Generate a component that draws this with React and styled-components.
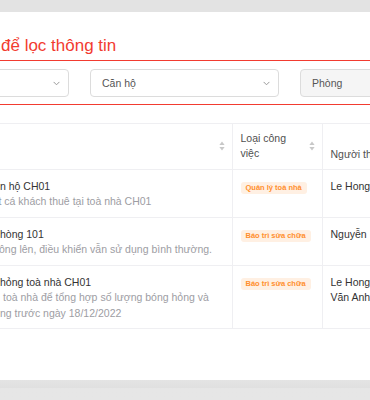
import React from "react";
import styled, { createGlobalStyle } from "styled-components";

const Global = createGlobalStyle`
  html, body { margin: 0; padding: 0; }
  body {
    width: 370px;
    height: 400px;
    overflow: hidden;
    background: linear-gradient(#e3e3e3, #e6e6e6);
    font-family: "Liberation Sans", Arial, sans-serif;
  }
`;

const Page = styled.div`
  padding-top: 12px;
  height: 388px;
  box-sizing: border-box;
  background: linear-gradient(to bottom, #e3e3e3 0, #e3e3e3 12px, transparent 12px),
    linear-gradient(to bottom, transparent 380px, #e4e4e4 380px, #dadada 400px);
`;

const Card = styled.div`
  background: #fff;
  height: 368px;
  padding-top: 24px;
  box-sizing: border-box;
  overflow: hidden;
`;

const Title = styled.div`
  font-size: 17px;
  line-height: 20px;
  color: #f23b30;
  padding-left: 1px;
  white-space: nowrap;
  margin-bottom: 3.5px;
`;

const FilterBox = styled.div`
  border: 1.5px solid #f23b30;
  margin: 0 -6px;
  padding: 8.5px 0 6.5px;
`;

const FilterRow = styled.div`
  display: grid;
  grid-template-columns: repeat(3, 189px);
  gap: 21px;
  margin-left: -115px;
`;

const Select = styled.div`
  height: 28px;
  box-sizing: border-box;
  border: 1px solid #dcdcdc;
  border-radius: 4px;
  background: ${(p) => (p.$disabled ? "#f5f5f5" : "#fff")};
  display: flex;
  align-items: center;
  justify-content: ${(p) => (p.$empty ? "flex-end" : "space-between")};
  padding: 0 8px 0 11px;
  font-size: 10.5px;
  color: #555;
`;

const Chevron = () => (
  <svg width="7" height="5" viewBox="0 0 7 5">
    <path d="M0.6 0.9 L3.5 3.8 L6.4 0.9" fill="none" stroke="#9a9a9a" strokeWidth="1" />
  </svg>
);

const SortIcon = () => (
  <svg width="6" height="10" viewBox="0 0 6 10">
    <path d="M3 0.5 L5.6 4 L0.4 4 Z" fill="#c8c8c8" />
    <path d="M3 9.5 L5.6 6 L0.4 6 Z" fill="#c8c8c8" />
  </svg>
);

const TableWrap = styled.div`
  margin-top: 18px;
`;

const Table = styled.table`
  border-collapse: collapse;
  table-layout: fixed;
  width: 420px;
  font-size: 10.5px;
  line-height: 15.5px;
`;

const HeadRow = styled.tr`
  height: 46px;
  border-top: 1px solid #efeff2;
  border-bottom: 1px solid #efeff2;
`;

const Th = styled.th`
  text-align: left;
  font-weight: 400;
  color: #505050;
  padding: ${(p) => (p.$bottom ? "0 8px 6px 8px" : "0 7px 0 8px")};
  vertical-align: ${(p) => (p.$bottom ? "bottom" : "middle")};
  border-left: ${(p) => (p.$first ? "none" : "1px solid #efeff2")};
  white-space: nowrap;
`;

const ThInner = styled.div`
  display: flex;
  align-items: center;
  justify-content: space-between;
`;

const Row = styled.tr`
  border-bottom: 1px solid #efeff2;
`;

const Td = styled.td`
  vertical-align: top;
  padding: 9px 8px 7px ${(p) => (p.$first ? "0" : "8px")};
  border-left: ${(p) => (p.$first ? "none" : "1px solid #efeff2")};
  color: #333;
  white-space: nowrap;
  overflow: hidden;
`;

const Line = styled.div`
  color: ${(p) => (p.$muted ? "#9d9da3" : "#333")};
  margin-left: ${(p) => p.$shift || 0}px;
`;

const Tag = styled.span`
  display: inline-block;
  margin-top: 3px;
  height: 12px;
  line-height: 12px;
  padding: 0 5px;
  border-radius: 3px;
  background: #fff0e3;
  color: #ff8f2e;
  font-size: 7.5px;
  font-weight: 700;
`;

const rows = [
  {
    title: "n hộ CH01",
    sub: ["t cá khách thuê tại toà nhà CH01"],
    subShift: -1.5,
    tag: "Quản lý toà nhà",
    people: ["Le Hong"],
  },
  {
    title: "hòng 101",
    sub: ["ông lên, điều khiển vẫn sử dụng bình thường."],
    subShift: -1,
    tag: "Báo trì sửa chữa",
    people: ["Nguyễn"],
  },
  {
    title: "hỏng toà nhà CH01",
    sub: ["toà nhà để tổng hợp số lượng bóng hỏng và", "ng trước ngày 18/12/2022"],
    subShift: 3,
    tag: "Báo trì sửa chữa",
    people: ["Le Hong", "Văn Anh"],
  },
];

export default function App() {
  return (
    <>
      <Global />
      <Page>
        <Card>
          <Title>để lọc thông tin</Title>
          <FilterBox>
            <FilterRow>
              <Select $empty>
                <Chevron />
              </Select>
              <Select>
                <span>Căn hộ</span>
                <Chevron />
              </Select>
              <Select $disabled>
                <span>Phòng</span>
              </Select>
            </FilterRow>
          </FilterBox>
          <TableWrap>
            <Table>
              <colgroup>
                <col style={{ width: 232 }} />
                <col style={{ width: 90 }} />
                <col style={{ width: 98 }} />
              </colgroup>
              <thead>
                <HeadRow>
                  <Th $first>
                    <ThInner>
                      <span />
                      <SortIcon />
                    </ThInner>
                  </Th>
                  <Th>
                    <ThInner>
                      <span>
                        Loại công
                        <br />
                        việc
                      </span>
                      <SortIcon />
                    </ThInner>
                  </Th>
                  <Th $bottom>Người thực hiện</Th>
                </HeadRow>
              </thead>
              <tbody>
                {rows.map((r, i) => (
                  <Row key={i}>
                    <Td $first>
                      <Line>{r.title}</Line>
                      {r.sub.map((s, j) => (
                        <Line key={j} $muted $shift={j === 0 ? r.subShift : 0}>
                          {s}
                        </Line>
                      ))}
                    </Td>
                    <Td>
                      <Tag>{r.tag}</Tag>
                    </Td>
                    <Td>
                      {r.people.map((p, j) => (
                        <Line key={j}>{p}</Line>
                      ))}
                    </Td>
                  </Row>
                ))}
              </tbody>
            </Table>
          </TableWrap>
        </Card>
      </Page>
    </>
  );
}
